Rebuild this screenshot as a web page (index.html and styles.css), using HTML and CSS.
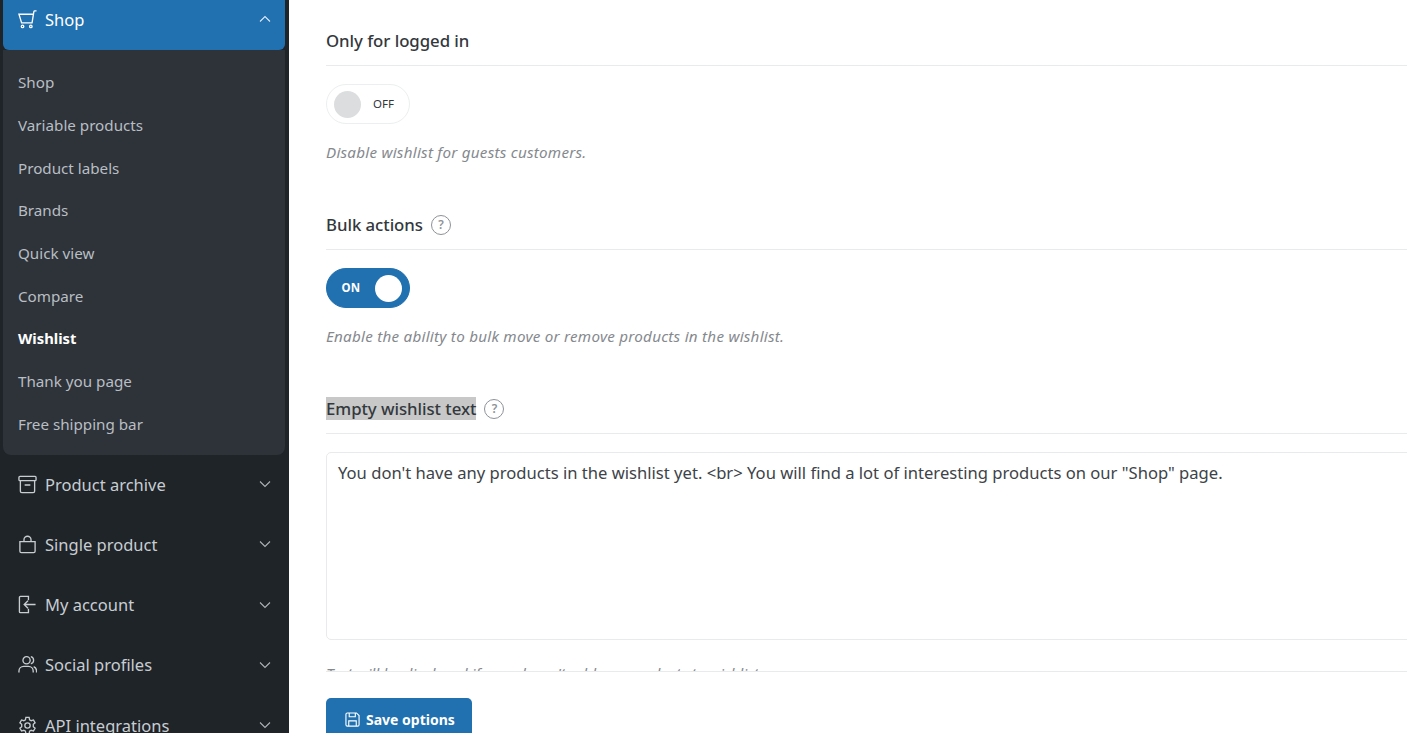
FILE: index.html
```html
<!DOCTYPE html>
<html lang="en">
<head>
    <meta charset="UTF-8">
    <meta name="viewport" content="width=device-width, initial-scale=1.0">
    <title>Wishlist options</title>
    <link rel="stylesheet" href="styles.css">
</head>
<body>

<div class="page">
    <aside class="sidebar">
        <div class="nav-item active">
            <svg class="nav-icon" viewBox="0 0 20 20"><path d="M19.500 1h-1.800a1 1 0 0 0-1 .8L14.800 13.500H3.800L1 4.500h15.300"/><circle cx="4.800" cy="17.300" r="1.300"/><circle cx="13.500" cy="17.300" r="1.300"/></svg>
            <span class="nav-label">Shop</span>
            <svg class="chevron" viewBox="0 0 12 8"><path d="M1 6.500l5-5 5 5"/></svg>
        </div>
        <div class="submenu">
            <a class="sub-item">Shop</a>
            <a class="sub-item">Variable products</a>
            <a class="sub-item">Product labels</a>
            <a class="sub-item">Brands</a>
            <a class="sub-item">Quick view</a>
            <a class="sub-item">Compare</a>
            <a class="sub-item current">Wishlist</a>
            <a class="sub-item">Thank you page</a>
            <a class="sub-item">Free shipping bar</a>
        </div>
        <div class="nav-item">
            <svg class="nav-icon" viewBox="0 0 20 20"><rect x="1" y="1.500" width="18" height="4.500" rx="1"/><path d="M2.500 6v11a1.500 1.500 0 0 0 1.500 1.500h12a1.500 1.500 0 0 0 1.500-1.500V6M7 10.500h6"/></svg>
            <span class="nav-label">Product archive</span>
            <svg class="chevron" viewBox="0 0 12 8"><path d="M1 1.500l5 5 5-5"/></svg>
        </div>
        <div class="nav-item">
            <svg class="nav-icon" viewBox="0 0 20 20"><path d="M2 7h16v10a1.500 1.500 0 0 1-1.500 1.500h-13A1.500 1.500 0 0 1 2 17zM6.300 7V5a3.700 3.700 0 0 1 7.400 0v2"/></svg>
            <span class="nav-label">Single product</span>
            <svg class="chevron" viewBox="0 0 12 8"><path d="M1 1.500l5 5 5-5"/></svg>
        </div>
        <div class="nav-item">
            <svg class="nav-icon" viewBox="0 0 20 20"><path d="M11 5.500V1.500H2.500a1 1 0 0 0-1 1v15a1 1 0 0 0 1 1H11v-4M18.500 10H7M10.500 6L6.500 10l4 4"/></svg>
            <span class="nav-label">My account</span>
            <svg class="chevron" viewBox="0 0 12 8"><path d="M1 1.500l5 5 5-5"/></svg>
        </div>
        <div class="nav-item">
            <svg class="nav-icon" viewBox="0 0 20 20"><circle cx="9" cy="5.500" r="3.800"/><path d="M1 18.500v-1.500A5 5 0 0 1 6 12h5a5 5 0 0 1 5 5v1.500M13.500 1.800a3.800 3.800 0 0 1 0 7.400M16.500 12.200a5 5 0 0 1 3 4.800v1.500"/></svg>
            <span class="nav-label">Social profiles</span>
            <svg class="chevron" viewBox="0 0 12 8"><path d="M1 1.500l5 5 5-5"/></svg>
        </div>
        <div class="nav-item">
            <svg class="nav-icon" viewBox="0 0 20 20"><circle cx="10" cy="10" r="2.800"/><path d="M8.300 1.500h3.400l.5 2.500 1.700 1 2.400-.8 1.700 3-1.900 1.600v2.400l1.900 1.600-1.700 3-2.400-.8-1.700 1-.5 2.500H8.300l-.5-2.500-1.700-1-2.400.8-1.700-3 1.900-1.600V8.800L2 7.200l1.700-3 2.400.8 1.700-1z"/></svg>
            <span class="nav-label">API integrations</span>
            <svg class="chevron" viewBox="0 0 12 8"><path d="M1 1.500l5 5 5-5"/></svg>
        </div>
    </aside>

    <main class="content">
        <div class="options">
            <section class="option">
                <h3 class="option-title"><span>Only for logged in</span></h3>
                <div class="switch">
                    <span class="knob"></span>
                    <span class="switch-text">OFF</span>
                </div>
                <p class="hint">Disable wishlist for guests customers.</p>
            </section>

            <section class="option">
                <h3 class="option-title"><span>Bulk actions</span> <span class="help">?</span></h3>
                <div class="switch on">
                    <span class="switch-text">ON</span>
                    <span class="knob"></span>
                </div>
                <p class="hint">Enable the ability to bulk move or remove products in the wishlist.</p>
            </section>

            <section class="option">
                <h3 class="option-title"><span class="selected">Empty wishlist text</span> <span class="help">?</span></h3>
                <textarea class="text-field">You don't have any products in the wishlist yet. &lt;br&gt; You will find a lot of interesting products on our "Shop" page.</textarea>
                <p class="hint field-hint">Text will be displayed if user doesn't add any products to wishlist.</p>
            </section>
        </div>

        <div class="save-bar">
            <button class="save-btn">
                <svg class="save-icon" viewBox="0 0 16 16"><path d="M1 2.500A1.500 1.500 0 0 1 2.500 1h9.700L15 3.800v9.700a1.500 1.500 0 0 1-1.500 1.500h-11A1.500 1.500 0 0 1 1 13.500zM4.500 1v4h6.500V1M4 15V9.500h8V15"/></svg>
                Save options
            </button>
        </div>
    </main>
</div>

</body>
</html>
```

FILE: styles.css
```css
* {
    box-sizing: border-box;
}

html, body {
    height: 100%;
    margin: 0;
    overflow: hidden;
}

body {
    font-family: "Noto Sans", "Open Sans", Arial, sans-serif;
    background-color: #fff;
    color: #333a40;
}

.page {
    display: flex;
    height: 733px;
}

/* sidebar */
.sidebar {
    flex: 0 0 289px;
    padding: 0 4px 0 3px;
    background-color: #1f2429;
    overflow: hidden;
}

.nav-item {
    display: flex;
    align-items: center;
    height: 60.2px;
    padding: 0 14px 2px 15px;
    color: #c8cdd2;
    font-size: 16.5px;
}

.sidebar > .nav-item:first-child {
    margin-top: -10px;
}

.nav-item.active {
    background-color: #2170b0;
    border-radius: 0 0 6px 6px;
    color: #fff;
}

.nav-icon {
    flex: none;
    width: 19px;
    height: 19px;
    margin-right: 8px;
    fill: none;
    stroke: currentColor;
    stroke-width: 1.4;
}

.nav-label {
    flex: 1;
}

.chevron {
    width: 12px;
    height: 8px;
    fill: none;
    stroke: currentColor;
    stroke-width: 1.1;
    opacity: 0.85;
}

.submenu {
    display: flex;
    flex-direction: column;
    height: 405px;
    padding: 10.8px 15px 10.2px;
    background-color: #2d3339;
    border-radius: 0 0 8px 8px;
}

.sub-item {
    flex: 1;
    display: flex;
    align-items: center;
    color: #b9bec4;
    font-size: 15.2px;
}

.sub-item.current {
    color: #fff;
    font-weight: 700;
    font-size: 14.8px;
}

/* main column */
.content {
    flex: 1;
    min-width: 0;
    display: flex;
    flex-direction: column;
    padding-left: 37px;
}

.options {
    flex: none;
    height: 671px;
    padding-top: 29px;
    overflow: hidden;
}

.option {
    height: 184px;
}

.option-title {
    display: flex;
    align-items: center;
    gap: 8px;
    height: 37px;
    margin: 0 0 18px;
    padding-bottom: 13px;
    border-bottom: 1px solid #e8eaeb;
    font-size: 16.8px;
    font-weight: 500;
    color: #33383d;
    letter-spacing: -0.05px;
}

.selected {
    background-color: #c8c8c8;
}

.help {
    display: flex;
    justify-content: center;
    align-items: center;
    width: 20px;
    height: 20px;
    border: 1px solid #8d9297;
    border-radius: 50%;
    font-size: 12px;
    font-weight: 600;
    color: #8d9297;
}

.switch {
    display: flex;
    align-items: center;
    width: 84px;
    height: 40px;
    padding: 0 7px;
    gap: 12px;
    border: 1px solid #eceeef;
    border-radius: 20px;
    font-size: 11.5px;
    color: #33383d;
}

.switch-text {
    padding-bottom: 2px;
}

.switch.on {
    justify-content: flex-end;
    background-color: #2170b0;
    border-color: #2170b0;
    color: #fff;
    font-weight: 700;
    gap: 15px;
}

.knob {
    width: 27px;
    height: 27px;
    border-radius: 50%;
    background-color: #dcdddf;
}

.switch.on .knob {
    background-color: #fff;
}

.hint {
    margin: 19px 0 0;
    font-size: 15.2px;
    line-height: 19px;
    font-style: italic;
    letter-spacing: 0.25px;
    color: #85898e;
}

.field-hint {
    margin-top: 24px;
    letter-spacing: 0;
}

.text-field {
    display: block;
    width: calc(100% + 10px);
    height: 188px;
    padding: 8px 11px;
    border: 1px solid #e8eaeb;
    border-radius: 5px;
    font-family: inherit;
    font-size: 16.6px;
    line-height: 24px;
    color: #3d4348;
    resize: none;
}

.save-bar {
    flex: none;
    padding-top: 26px;
    border-top: 1px solid #e8eaeb;
    background-color: #fff;
}

.save-btn {
    display: flex;
    align-items: center;
    gap: 6px;
    width: 146px;
    height: 44px;
    padding: 0 0 2px 19px;
    border: none;
    border-radius: 5px 5px 0 0;
    background-color: #2170b0;
    color: #fff;
    font-family: inherit;
    font-size: 14px;
    font-weight: 700;
}

.save-icon {
    width: 15px;
    height: 15px;
    fill: none;
    stroke: currentColor;
    stroke-width: 1.2;
}
```
